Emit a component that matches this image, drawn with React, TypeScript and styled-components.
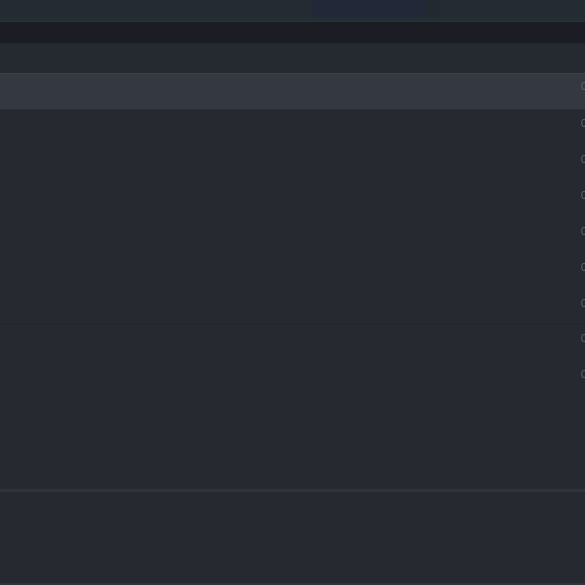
import { FunctionComponent } from 'react';
import styled, { createGlobalStyle } from 'styled-components';

const GlobalStyle = createGlobalStyle`
  html, body {
    margin: 0;
    padding: 0;
    background: #262a30;
    overflow: hidden;
    font-family: 'Inter', 'Liberation Sans', sans-serif;
  }
`;

const Page = styled.div`
  width: 585px;
  height: 585px;
  display: flex;
  flex-direction: column;
  background: #262a30;
  overflow: hidden;
`;

const TopStrip = styled.div`
  height: 17px;
  display: flex;
  background: #252b33;
`;

const TabSpacer = styled.div<{ $w: number }>`
  width: ${(p) => p.$w}px;
`;

const ActiveTab = styled.div`
  width: 113px;
  background: #232838;
`;

const TabEdge = styled.div`
  width: 15px;
  background: #222a30;
`;

const AccentLine = styled.div`
  height: 5px;
  background: #232e32;
  border-bottom: 1px solid #2c3238;
  box-sizing: border-box;
`;

const DarkBar = styled.div`
  height: 21px;
  background: #1b1c24;
`;

const SubBar = styled.div`
  height: 30px;
  background: #252a30;
  border-top: 1px solid #23272d;
  box-sizing: border-box;
`;

const List = styled.div`
  display: flex;
  flex-direction: column;
`;

const Row = styled.div<{ $active?: boolean; $h?: number }>`
  height: ${(p) => p.$h ?? 36}px;
  box-sizing: border-box;
  display: flex;
  align-items: flex-start;
  justify-content: flex-end;
  padding-top: 6px;
  background: ${(p) => (p.$active ? '#343841' : 'transparent')};
  border-top: 1px solid ${(p) => (p.$active ? '#3b4049' : 'transparent')};
  border-bottom: 1px solid ${(p) => (p.$active ? '#2b2f36' : 'transparent')};
  overflow: hidden;
`;

const EdgeGlyph = styled.span`
  font-size: 10px;
  line-height: 12px;
  color: #62666e;
  margin-right: -2px;
  filter: blur(0.5px);
`;

const Divider = styled.div<{ $light?: boolean }>`
  height: ${(p) => (p.$light ? 3 : 2)}px;
  background: ${(p) => (p.$light ? '#30343b' : '#23272c')};
`;

const Spacer = styled.div<{ $h: number }>`
  height: ${(p) => p.$h}px;
`;

const Footer = styled.div`
  flex: 1;
  border-bottom: 2px solid #30343b;
`;

const rows = ['0', '0', '0', '0', '0'];

const App: FunctionComponent = () => (
  <>
    <GlobalStyle />
    <Page>
      <TopStrip>
        <TabSpacer $w={312} />
        <ActiveTab />
        <TabEdge />
      </TopStrip>
      <AccentLine />
      <DarkBar />
      <SubBar />
      <List>
        <Row $active $h={37}>
          <EdgeGlyph>0</EdgeGlyph>
        </Row>
        {rows.map((g, i) => (
          <Row key={i}>
            <EdgeGlyph>{g}</EdgeGlyph>
          </Row>
        ))}
        <Row $h={33}>
          <EdgeGlyph>0</EdgeGlyph>
        </Row>
      </List>
      <Divider />
      <Row>
        <EdgeGlyph>0</EdgeGlyph>
      </Row>
      <Row>
        <EdgeGlyph>0</EdgeGlyph>
      </Row>
      <Spacer $h={92} />
      <Divider $light />
      <Footer />
    </Page>
  </>
);

export default App;
